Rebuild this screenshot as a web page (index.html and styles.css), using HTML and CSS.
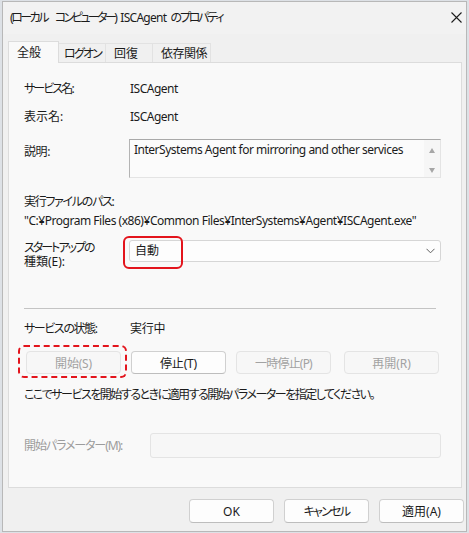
FILE: index.html
```html
<!DOCTYPE html>
<html lang="ja">
<head>
  <meta charset="UTF-8" />
  <title>ISCAgent のプロパティ</title>
  <link rel="stylesheet" href="styles.css">
</head>
<body>
  <div class="window">
    <div class="titlebar">
      <span class="title">
        <span class="t-local">(ローカル</span>
        <span class="t-computer">コンピューター)</span>
        <span class="t-name">ISCAgent</span>
        <span class="t-prop">のプロパティ</span>
      </span>
      <svg class="close" width="11" height="11" viewBox="0 0 11 11">
        <path d="M0.5 0.5 L10.5 10.5 M10.5 0.5 L0.5 10.5" stroke="#1c1c1c" stroke-width="1.1" fill="none" />
      </svg>
    </div>

    <div class="tabs">
      <div class="tab active tab-general">全般</div>
      <div class="tab tab-logon">ログオン</div>
      <div class="tab tab-recovery">回復</div>
      <div class="tab tab-deps">依存関係</div>
    </div>

    <div class="panel">
      <div class="row row-name">
        <span class="label lbl-name">サービス名:</span>
        <span class="value en">ISCAgent</span>
      </div>
      <div class="row row-display">
        <span class="label">表示名:</span>
        <span class="value en">ISCAgent</span>
      </div>
      <div class="row row-desc">
        <span class="label lbl-desc">説明:</span>
        <div class="textbox">
          <div class="textbox-text">InterSystems Agent for mirroring and other services</div>
          <div class="scroll">
            <span class="arrow up"></span>
            <span class="arrow down"></span>
          </div>
        </div>
      </div>

      <div class="exe-label">実行ファイルのパス:</div>
      <div class="exe-path">"C:¥Program Files (x86)¥Common Files¥InterSystems¥Agent¥ISCAgent.exe"</div>

      <div class="row row-startup">
        <span class="label two-line"><span class="lbl-startup">スタートアップの</span><br>種類(E):</span>
        <div class="combo">
          <span class="combo-text">自動</span>
          <svg class="chevron" width="9" height="6" viewBox="0 0 9 6">
            <path d="M0.5 0.8 L4.5 4.8 L8.5 0.8" stroke="#606060" stroke-width="1" fill="none" />
          </svg>
        </div>
      </div>

      <div class="separator"></div>

      <div class="row row-status">
        <span class="label lbl-status">サービスの状態:</span>
        <span class="value val-status">実行中</span>
      </div>

      <div class="svc-buttons">
        <button class="btn disabled marked">開始(S)</button>
        <button class="btn">停止(T)</button>
        <button class="btn disabled btn-pause">一時停止(P)</button>
        <button class="btn disabled btn-resume">再開(R)</button>
      </div>

      <div class="help">ここでサービスを開始するときに適用する開始パラメーターを指定してください。</div>

      <div class="row row-param">
        <span class="label muted lbl-param">開始パラメーター(M):</span>
        <div class="param-input"></div>
      </div>
    </div>

    <div class="footer">
      <button class="btn btn-footer">OK</button>
      <button class="btn btn-footer btn-cancel">キャンセル</button>
      <button class="btn btn-footer">適用(A)</button>
    </div>
  </div>
</body>
</html>
```

FILE: styles.css
```css
body {
  margin: 0;
  padding: 0;
  background-color: #dde1e6;
  font-family: 'Noto Sans', 'Noto Sans CJK JP', sans-serif;
  font-size: 12px;
  line-height: 16px;
  color: #1b1b1b;
  font-feature-settings: "palt";
  white-space: nowrap;
}

.window {
  margin: 1px 0 0 2px;
  width: 463px;
  height: 529px;
  border: 1px solid #b8b8b8;
  background-color: #f0f0f0;
}

/* title bar */
.titlebar {
  height: 32px;
  display: flex;
  align-items: center;
  justify-content: space-between;
  padding: 0 4px 0 7px;
  background-color: #f2f2f2;
}

.title {
  display: flex;
  gap: 6px;
}

.t-local { letter-spacing: -2.5px; }
.t-computer { letter-spacing: -2.6px; margin-left: 2px; }
.t-name { letter-spacing: -0.7px; margin-left: -1px; }
.t-prop { letter-spacing: -2.2px; margin-left: -2px; }

.close {
  display: block;
  margin-top: -2px;
}

/* tabs */
.tabs {
  display: flex;
  align-items: flex-end;
  height: 21px;
  margin: 7px 0 0 5px;
}

.tab {
  height: 19px;
  line-height: 19px;
  padding-left: 7px;
  box-sizing: border-box;
  border: 1px solid #e2e2e2;
  border-bottom: none;
  background-color: #f0f0f0;
  margin-left: -1px;
}

.tab.active {
  height: 22px;
  line-height: 21px;
  margin-left: 0;
  margin-bottom: -1px;
  background-color: #f9f9f9;
  border-color: #dcdcdc;
  position: relative;
  z-index: 1;
}

.tab-general { width: 51px; padding-left: 8px; }
.tab-logon { width: 48px; padding-left: 5px; letter-spacing: -1.8px; }
.tab-recovery { width: 48px; padding-left: 8px; }
.tab-deps { width: 59px; padding-left: 8px; letter-spacing: -0.5px; }

/* general page */
.panel {
  margin: 0 4px 0 5px;
  height: 426px;
  box-sizing: border-box;
  border: 1px solid #dcdcdc;
  background-color: #f9f9f9;
  padding: 18px 20px 0 15px;
}

.row {
  display: grid;
  grid-template-columns: 105px 1fr;
  align-items: center;
}

.value {
  padding-left: 1px;
}

.en {
  letter-spacing: -0.5px;
}

.lbl-name { letter-spacing: -1.9px; }
.lbl-desc { letter-spacing: -0.4px; }
.lbl-startup { letter-spacing: -2px; }
.lbl-status { letter-spacing: -1.4px; }
.lbl-param { letter-spacing: -1.1px; }
.val-status { letter-spacing: -0.3px; }

.row-display { margin-top: 12px; }

.row-desc {
  margin-top: 14px;
  align-items: start;
}

.row-desc .label {
  padding-top: 5px;
}

.textbox {
  height: 39px;
  box-sizing: border-box;
  border: 1px solid #e4e4e4;
  border-top-color: #a9a9a9;
  border-left-color: #b4b4b4;
  background-color: #fbfbfb;
  display: flex;
  justify-content: space-between;
}

.textbox-text {
  padding: 2px 0 0 4px;
  letter-spacing: -0.49px;
}

.scroll {
  width: 16px;
  display: flex;
  flex-direction: column;
  align-items: center;
  justify-content: space-between;
  padding: 8px 0 4px;
  background-color: #f6f6f6;
}

.arrow {
  width: 0;
  height: 0;
  border-left: 3.5px solid transparent;
  border-right: 3.5px solid transparent;
}

.arrow.up { border-bottom: 5px solid #a6a6a6; }
.arrow.down { border-top: 5px solid #a6a6a6; }

.exe-label {
  margin-top: 16px;
  letter-spacing: -1.3px;
}

.exe-path {
  margin-top: 3px;
  letter-spacing: -0.47px;
}

.row-startup {
  margin-top: 11px;
  align-items: start;
}

.two-line {
  line-height: 14px;
  padding-top: 1px;
}

.combo {
  height: 22px;
  box-sizing: border-box;
  border: 1px solid #d6d6d6;
  border-radius: 3px;
  background-color: #fdfdfd;
  display: flex;
  align-items: center;
  justify-content: space-between;
  padding: 0 5px 0 5px;
  position: relative;
}

/* red highlight drawn over the combo box */
.combo::before {
  content: "";
  position: absolute;
  left: -7px;
  top: -5px;
  width: 56px;
  height: 29px;
  border: 2px solid #e3141c;
  border-radius: 6px;
}

.chevron {
  display: block;
}

.separator {
  height: 1px;
  background-color: #c4c4c4;
  margin: 39px 5px 0 0;
}

.row-status {
  margin-top: 12px;
}

.svc-buttons {
  display: flex;
  gap: 10px;
  margin: 14px 0 0 2px;
}

.btn {
  font-family: inherit;
  font-size: 12px;
  font-feature-settings: "palt";
  letter-spacing: -0.2px;
  color: #1b1b1b;
  width: 95px;
  height: 23px;
  padding: 0;
  box-sizing: border-box;
  background-color: #fdfdfd;
  border: 1px solid #d0d0d0;
  border-bottom-color: #bdbdbd;
  border-radius: 4px;
}

.btn.disabled {
  color: #a2a2a2;
  background-color: #f7f7f7;
  border-color: #e4e4e4;
}

.btn.marked {
  position: relative;
}

/* dashed red highlight round the start button */
.btn.marked::after {
  content: "";
  position: absolute;
  left: -9px;
  top: -7px;
  right: -7px;
  bottom: -5px;
  border: 2px dashed #e3141c;
  border-radius: 6px;
}

.btn-pause { letter-spacing: -0.8px; }

.btn-resume {
  margin-left: 3px;
  letter-spacing: 0;
}

.help {
  margin-top: 13px;
  letter-spacing: -1.5px;
}

.row-param {
  margin-top: 30px;
  grid-template-columns: 126px 1fr;
}

.muted {
  color: #9c9c9c;
}

.param-input {
  height: 25px;
  box-sizing: border-box;
  border: 1px solid #e4e4e4;
  border-radius: 3px;
  background-color: #f7f7f7;
}

/* dialog buttons */
.footer {
  display: flex;
  justify-content: flex-end;
  gap: 10px;
  margin-top: 11px;
  padding-right: 2px;
}

.btn-footer {
  width: 85px;
  height: 24px;
  letter-spacing: 0;
}

.btn-cancel { letter-spacing: -1.7px; }
```
